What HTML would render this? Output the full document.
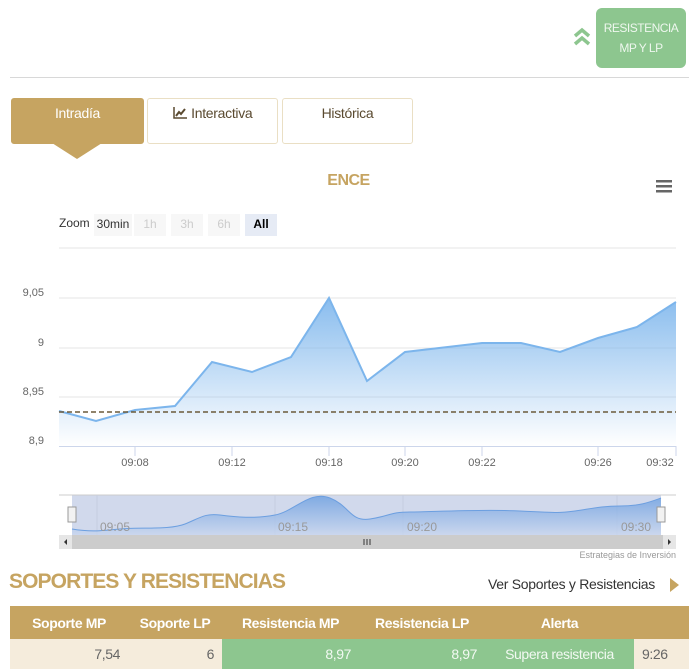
<!DOCTYPE html>
<html><head><meta charset="utf-8"><style>
*{margin:0;padding:0;box-sizing:border-box}
body{width:689px;height:668px;background:#fff;font-family:"Liberation Sans",sans-serif;position:relative;overflow:hidden;color:#333}
.abs{position:absolute}
.btn{position:absolute;top:8px;left:596px;width:90px;height:60px;background:#8dc68f;border-radius:6px;color:#eef7ee;font-size:12px;text-align:center;line-height:20px;padding-top:10px;letter-spacing:-0.5px}
.hr{position:absolute;top:77px;left:10px;width:679px;height:1px;background:#d8d8d8}
.tab{position:absolute;top:98px;height:46px;border:1px solid #eadfc4;border-radius:3px;text-align:center;font-size:14px;color:#5a4a30;padding-top:6px;letter-spacing:-0.3px}
.tab.act{background:#c6a461;border-color:#c6a461;color:#fff}
table{position:absolute;top:606px;left:10px;width:690px;border-collapse:collapse;font-size:14px;letter-spacing:-0.4px}
th{background:#c6a461;color:#fff;height:33px;font-weight:bold;text-align:center}
td{height:30px;text-align:right;padding-right:8px;color:#666;background:#f5ecdc}
td.g{background:#8dc68f;color:#f2f9f2}
</style></head><body>
<svg class="abs" style="left:572px;top:26px" width="20" height="22" viewBox="0 0 20 22"><path d="M3 10 L10 4 L17 10" fill="none" stroke="#8dc68f" stroke-width="3.5"/><path d="M3 18 L10 12 L17 18" fill="none" stroke="#8dc68f" stroke-width="3.5"/></svg>
<div class="btn">RESISTENCIA<br>MP Y LP</div>
<div class="hr"></div>
<div class="tab act" style="left:11px;width:133px">Intradía</div>
<svg class="abs" style="left:52px;top:143px" width="50" height="17"><path d="M0 0 L25 16 L50 0Z" fill="#c6a461"/></svg>
<div class="tab" style="left:147px;width:131px"><svg width="15" height="13" style="vertical-align:-1px"><path d="M1 1V12H14" fill="none" stroke="#5a4a30" stroke-width="1.5"/><path d="M3 10L6 6L8 8L12 3" fill="none" stroke="#5a4a30" stroke-width="2"/></svg> Interactiva</div>
<div class="tab" style="left:282px;width:131px">Histórica</div>
<div class="abs" style="left:0;width:697px;top:172px;text-align:center;font-weight:bold;font-size:16px;color:#c6a461;letter-spacing:-0.5px">ENCE</div>
<svg class="abs" style="left:656px;top:180px" width="16" height="13"><rect y="0" width="16" height="2.5" fill="#666"/><rect y="5" width="16" height="2.5" fill="#666"/><rect y="10" width="16" height="2.5" fill="#666"/></svg>
<div class="abs" style="left:59px;top:216px;font-size:12px;color:#333">Zoom</div>
<div class="abs" style="left:94px;top:214px;width:38px;height:22px;background:#f7f7f7;font-size:12px;line-height:20px;text-align:center;color:#333">30min</div>
<div class="abs" style="left:134px;top:214px;width:32px;height:22px;background:#f7f7f7;font-size:12px;line-height:20px;text-align:center;color:#ccc">1h</div>
<div class="abs" style="left:171px;top:214px;width:32px;height:22px;background:#f7f7f7;font-size:12px;line-height:20px;text-align:center;color:#ccc">3h</div>
<div class="abs" style="left:208px;top:214px;width:32px;height:22px;background:#f7f7f7;font-size:12px;line-height:20px;text-align:center;color:#ccc">6h</div>
<div class="abs" style="left:245px;top:214px;width:32px;height:22px;background:#e6ebf5;font-size:12px;line-height:20px;text-align:center;color:#000;font-weight:bold">All</div>
<svg class="abs" style="left:0;top:0" width="689" height="600" font-family="Liberation Sans" font-size="11" fill="#666">
<defs><linearGradient id="g" x1="0" y1="0" x2="0" y2="1"><stop offset="0" stop-color="#7cb5ec" stop-opacity=".9"/><stop offset="1" stop-color="#7cb5ec" stop-opacity="0"/></linearGradient>
<linearGradient id="g2" x1="0" y1="0" x2="0" y2="1"><stop offset="0" stop-color="#6c9fe0"/><stop offset="1" stop-color="#c9d6ee"/></linearGradient></defs>
<line x1="59" y1="248" x2="676" y2="248" stroke="#e6e6e6"/>
<line x1="59" y1="298" x2="676" y2="298" stroke="#e6e6e6"/>
<line x1="59" y1="348" x2="676" y2="348" stroke="#e6e6e6"/>
<line x1="59" y1="397" x2="676" y2="397" stroke="#e6e6e6"/>
<path d="M59 411L96 421L135 410L175 406L212 362L252 372L291 357L329 298L367 381L405 352L482 343L521 343L560 352L598 338L637 327L676 302V446H59Z" fill="url(#g)"/>
<path d="M59 411L96 421L135 410L175 406L212 362L252 372L291 357L329 298L367 381L405 352L482 343L521 343L560 352L598 338L637 327L676 302" fill="none" stroke="#7cb5ec" stroke-width="2"/>
<line x1="59" y1="412" x2="676" y2="412" stroke="#6b5a3a" stroke-width="1.5" stroke-dasharray="5,3"/>
<line x1="59" y1="446.5" x2="676" y2="446.5" stroke="#ccd6eb"/>
<g stroke="#ccd6eb"><line x1="135" y1="446" x2="135" y2="456"/><line x1="232" y1="446" x2="232" y2="456"/><line x1="329" y1="446" x2="329" y2="456"/><line x1="405" y1="446" x2="405" y2="456"/><line x1="482" y1="446" x2="482" y2="456"/><line x1="598" y1="446" x2="598" y2="456"/><line x1="676" y1="446" x2="676" y2="456"/></g>
<g text-anchor="end"><text x="44" y="296">9,05</text><text x="44" y="346">9</text><text x="44" y="395">8,95</text><text x="44" y="444">8,9</text></g>
<g text-anchor="middle"><text x="135" y="466">09:08</text><text x="232" y="466">09:12</text><text x="329" y="466">09:18</text><text x="405" y="466">09:20</text><text x="482" y="466">09:22</text><text x="598" y="466">09:26</text><text x="660" y="466">09:32</text></g>
<rect x="72" y="495" width="589" height="40" fill="#d1d9ec"/>
<line x1="59" y1="495" x2="676" y2="495" stroke="#ccc"/>
<g stroke="#c5cde0"><line x1="97" y1="495" x2="97" y2="535"/><line x1="275" y1="495" x2="275" y2="535"/><line x1="403" y1="495" x2="403" y2="535"/><line x1="617" y1="495" x2="617" y2="535"/></g>
<path d="M72 529C90 532 100 531 120 529S170 530 185 524S205 513 220 515S255 519 275 515S310 490 330 498S350 522 370 519S390 512 410 512S480 509 520 511S560 513 575 511S600 506 620 506S650 502 661 498V535H72Z" fill="url(#g2)" opacity=".8"/>
<path d="M72 529C90 532 100 531 120 529S170 530 185 524S205 513 220 515S255 519 275 515S310 490 330 498S350 522 370 519S390 512 410 512S480 509 520 511S560 513 575 511S600 506 620 506S650 502 661 498" fill="none" stroke="#6c9fe0" stroke-width="1"/>
<g fill="#999" font-size="12"><text x="100" y="531">09:05</text><text x="278" y="531">09:15</text><text x="407" y="531">09:20</text><text x="621" y="531">09:30</text></g>
<rect x="68" y="507" width="8" height="15" fill="#f2f2f2" stroke="#999"/><rect x="657" y="507" width="8" height="15" fill="#f2f2f2" stroke="#999"/>
<rect x="59" y="535" width="617" height="14" fill="#ccc"/>
<rect x="59" y="535" width="13" height="14" fill="#e6e6e6"/><rect x="663" y="535" width="13" height="14" fill="#e6e6e6"/>
<path d="M67 539V545L64 542Z" fill="#333"/><path d="M668 539V545L671 542Z" fill="#333"/>
<g stroke="#333"><line x1="364" y1="539" x2="364" y2="545"/><line x1="367" y1="539" x2="367" y2="545"/><line x1="370" y1="539" x2="370" y2="545"/></g>
<text x="676" y="558" text-anchor="end" font-size="9" fill="#999">Estrategias de Inversión</text>
</svg>
<div class="abs" style="left:9px;top:570px;font-size:21px;font-weight:bold;color:#c6a461;letter-spacing:-0.9px">SOPORTES Y RESISTENCIAS</div>
<div class="abs" style="left:488px;top:576px;font-size:14px;color:#333;letter-spacing:-0.3px">Ver Soportes y Resistencias</div>
<svg class="abs" style="left:670px;top:578px" width="10" height="14"><path d="M0 0L9 7L0 14Z" fill="#c6a461"/></svg>
<table><tr><th style="width:118px">Soporte MP</th><th style="width:94px">Soporte LP</th><th style="width:137px">Resistencia MP</th><th style="width:126px">Resistencia LP</th><th style="width:149px">Alerta</th><th></th></tr>
<tr><td>7,54</td><td>6</td><td class="g">8,97</td><td class="g">8,97</td><td class="g" style="text-align:center;padding:0">Supera resistencia</td><td style="text-align:left;padding-left:8px">9:26</td></tr></table>
</body></html>
